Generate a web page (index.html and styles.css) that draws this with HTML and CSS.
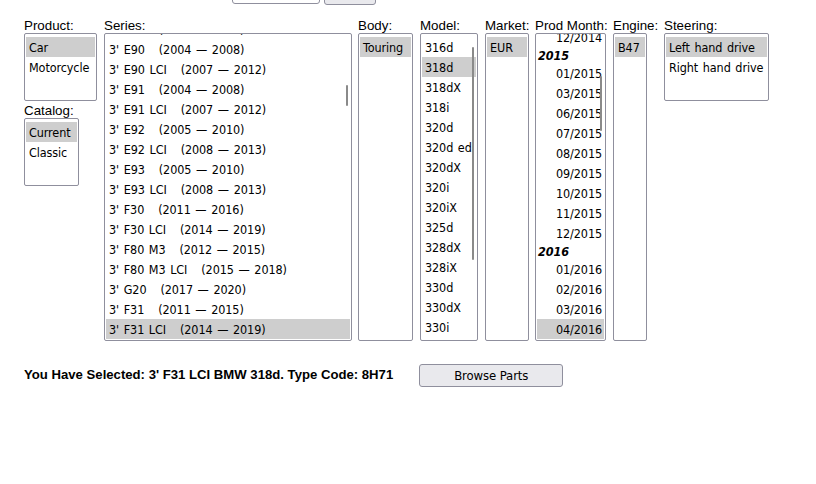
FILE: index.html
```html
<!DOCTYPE html>
<html lang="en">
<head>
  <meta charset="UTF-8">
  <meta name="viewport" content="width=device-width, initial-scale=1.0">
  <title>Parts Catalog</title>
  <link rel="stylesheet" href="styles.css">
</head>
<body>
  <div class="search">
    <input type="text" class="search-input">
    <button type="button" class="search-btn"></button>
  </div>

  <div class="picker">
    <div class="col">
      <div class="label">Product:</div>
      <div class="list list-short list-product">
        <div class="opt sel">Car</div>
        <div class="opt">Motorcycle</div>
      </div>
      <div class="label label-sub">Catalog:</div>
      <div class="list list-short list-catalog">
        <div class="opt sel">Current</div>
        <div class="opt">Classic</div>
      </div>
    </div>

    <div class="col">
      <div class="label">Series:</div>
      <div class="list list-tall list-series">
        <div class="scroll scroll-series">
          <div class="opt">3' E46   (1998 — 2005)</div>
          <div class="opt">3' E90   (2004 — 2008)</div>
          <div class="opt">3' E90 LCI   (2007 — 2012)</div>
          <div class="opt">3' E91   (2004 — 2008)</div>
          <div class="opt">3' E91 LCI   (2007 — 2012)</div>
          <div class="opt">3' E92   (2005 — 2010)</div>
          <div class="opt">3' E92 LCI   (2008 — 2013)</div>
          <div class="opt">3' E93   (2005 — 2010)</div>
          <div class="opt">3' E93 LCI   (2008 — 2013)</div>
          <div class="opt">3' F30   (2011 — 2016)</div>
          <div class="opt">3' F30 LCI   (2014 — 2019)</div>
          <div class="opt">3' F80 M3   (2012 — 2015)</div>
          <div class="opt">3' F80 M3 LCI   (2015 — 2018)</div>
          <div class="opt">3' G20   (2017 — 2020)</div>
          <div class="opt">3' F31   (2011 — 2015)</div>
          <div class="opt sel">3' F31 LCI   (2014 — 2019)</div>
        </div>
        <span class="thumb thumb-series"></span>
      </div>
    </div>

    <div class="col">
      <div class="label">Body:</div>
      <div class="list list-tall list-body">
        <div class="opt sel">Touring</div>
      </div>
    </div>

    <div class="col">
      <div class="label">Model:</div>
      <div class="list list-tall list-model">
        <div class="opt">316d</div>
        <div class="opt sel">318d</div>
        <div class="opt">318dX</div>
        <div class="opt">318i</div>
        <div class="opt">320d</div>
        <div class="opt">320d ed</div>
        <div class="opt">320dX</div>
        <div class="opt">320i</div>
        <div class="opt">320iX</div>
        <div class="opt">325d</div>
        <div class="opt">328dX</div>
        <div class="opt">328iX</div>
        <div class="opt">330d</div>
        <div class="opt">330dX</div>
        <div class="opt">330i</div>
        <span class="thumb thumb-model"></span>
      </div>
    </div>

    <div class="col">
      <div class="label">Market:</div>
      <div class="list list-tall list-market">
        <div class="opt sel">EUR</div>
      </div>
    </div>

    <div class="col">
      <div class="label">Prod Month:</div>
      <div class="list list-tall list-month">
        <div class="scroll scroll-month">
          <div class="opt opt-month">12/2014</div>
          <div class="group">2015</div>
          <div class="opt opt-month">01/2015</div>
          <div class="opt opt-month">03/2015</div>
          <div class="opt opt-month">06/2015</div>
          <div class="opt opt-month">07/2015</div>
          <div class="opt opt-month">08/2015</div>
          <div class="opt opt-month">09/2015</div>
          <div class="opt opt-month">10/2015</div>
          <div class="opt opt-month">11/2015</div>
          <div class="opt opt-month">12/2015</div>
          <div class="group">2016</div>
          <div class="opt opt-month">01/2016</div>
          <div class="opt opt-month">02/2016</div>
          <div class="opt opt-month">03/2016</div>
          <div class="opt opt-month sel">04/2016</div>
        </div>
        <span class="thumb thumb-month"></span>
      </div>
    </div>

    <div class="col">
      <div class="label">Engine:</div>
      <div class="list list-tall list-engine">
        <div class="opt sel">B47</div>
      </div>
    </div>

    <div class="col">
      <div class="label">Steering:</div>
      <div class="list list-short list-steering">
        <div class="opt sel">Left hand drive</div>
        <div class="opt">Right hand drive</div>
      </div>
    </div>
  </div>

  <div class="summary">
    <span class="summary-text">You Have Selected: 3' F31 LCI BMW 318d. Type Code: 8H71</span>
    <button type="button" class="browse-btn">Browse Parts</button>
  </div>
</body>
</html>
```

FILE: styles.css
```css
body {
  margin: 0;
  font-family: "Liberation Sans", Arial, sans-serif;
  font-size: 13.333px;
  color: #000;
  background: #fff;
}

/* search box, scrolled mostly out of view */
.search {
  display: flex;
  align-items: flex-start;
  gap: 4px;
  margin-top: -18px;
  padding-left: 232px;
  height: 23px;
}

.search-input {
  box-sizing: border-box;
  width: 88px;
  height: 22px;
  padding: 0;
  border: 1px solid #8f8f9d;
  border-radius: 3px;
  background: #fff;
}

.search-btn {
  box-sizing: border-box;
  width: 52px;
  height: 23px;
  border: 1px solid #8f8f9d;
  border-radius: 3px;
  background: #e9e9ed;
}

.picker {
  display: grid;
  grid-template-columns: 80px 254px 62px 65px 50px 78px 51px 110px;
  align-items: start;
  margin-top: 13px;
  padding-left: 24px;
}

.label {
  height: 15px;
  line-height: 15px;
  white-space: nowrap;
}

.label-sub {
  margin-top: 2px;
}

.list {
  position: relative;
  box-sizing: border-box;
  padding: 3px 1px 0 1px;
  border: 1px solid #8f8f9d;
  border-radius: 2px;
  overflow: hidden;
  background: #fff;
  font-family: "DejaVu Sans Condensed", "DejaVu Sans", sans-serif;
  font-stretch: condensed;
  font-size: 12.5px;
  letter-spacing: -0.1px;
  word-spacing: 1.2px;
}

.list-short {
  height: 68px;
}

.list-tall {
  height: 308px;
}

.list-product { width: 73px; }
.list-catalog { width: 55px; }
.list-series { width: 248px; padding-top: 0; }
.list-body { width: 55px; }
.list-model { width: 58px; }
.list-market { width: 44px; }
.list-month { width: 71px; padding-top: 0; }
.list-engine { width: 34px; }
.list-steering { width: 105px; }

.scroll-series {
  margin-top: -15px;
}

.scroll-month {
  margin-top: -7px;
}

.opt {
  height: 19px;
  line-height: 19px;
  padding: 1px 3px 0;
  white-space: pre;
  overflow: hidden;
}

.opt.sel {
  background: #cecece;
}

.opt-month {
  padding-left: 19px;
  padding-right: 0;
}

.group {
  height: 15px;
  line-height: 15px;
  padding: 1px 0 0 1px;
  font-weight: bold;
  font-style: italic;
}

.thumb {
  position: absolute;
  right: 3px;
  width: 2px;
  border-radius: 1px;
  background: #8a8a8a;
}

.thumb-series { top: 51px; height: 21px; }
.thumb-model { top: 13px; height: 213px; }
.thumb-month { top: 42px; height: 55px; }

.summary {
  display: flex;
  align-items: center;
  gap: 26px;
  margin-top: 23px;
  padding-left: 24px;
}

.summary-text {
  margin-bottom: 2px;
  font-weight: bold;
  font-size: 13.15px;
}

.browse-btn {
  box-sizing: border-box;
  width: 144px;
  height: 23px;
  padding: 0;
  border: 1px solid #8f8f9d;
  border-radius: 3px;
  background: #e9e9ed;
  color: #000;
  font-family: "DejaVu Sans Condensed", "DejaVu Sans", sans-serif;
  font-stretch: condensed;
  font-size: 13px;
  letter-spacing: -0.1px;
}
```
